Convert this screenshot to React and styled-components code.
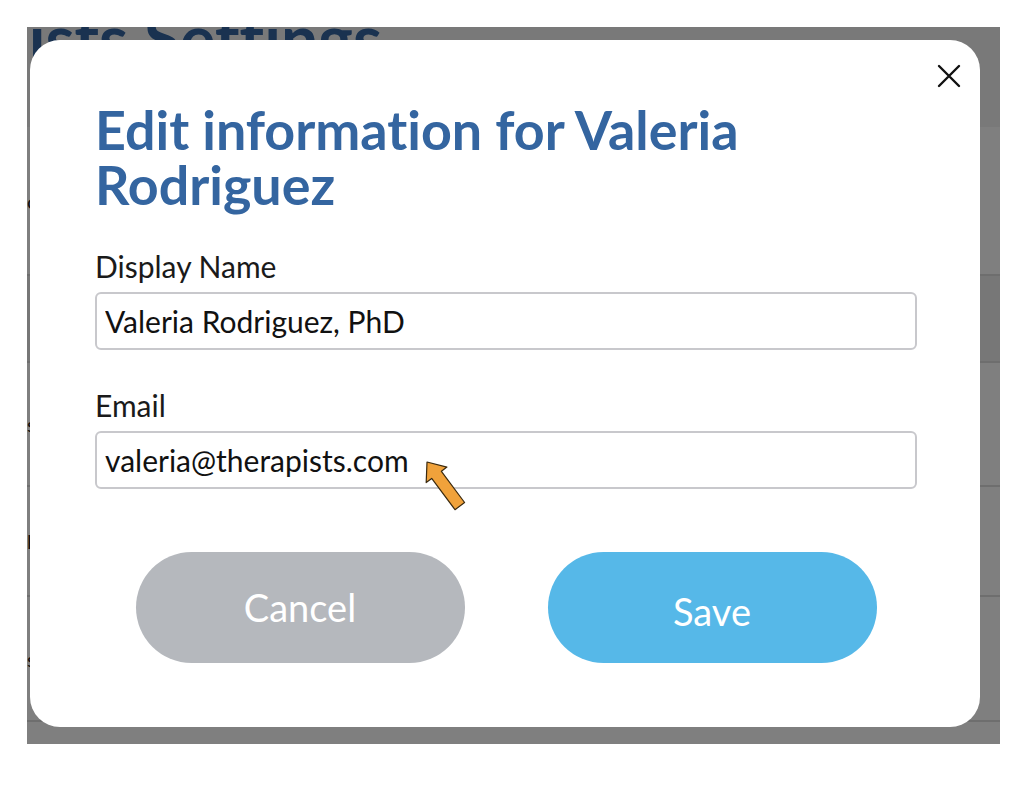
import React, { useState } from "react";
import styled, { createGlobalStyle } from "styled-components";

const GlobalStyle = createGlobalStyle`
  body {
    margin: 0;
    background: #ffffff;
    font-family: Lato, "Open Sans", sans-serif;
    font-variant-ligatures: no-common-ligatures;
  }
`;

const Screen = styled.div`
  padding: 27px 24px 41px 27px;
`;

const Frame = styled.div`
  position: relative;
  width: 973px;
  height: 717px;
  overflow: hidden;
  background: #ffffff;
`;

const PageHeader = styled.div`
  height: 100px;
  background: #f3f3f3;
  overflow: hidden;
`;

const PageTitle = styled.h1`
  margin: -27px 0 0 -205px;
  font-size: 66px;
  font-weight: 700;
  line-height: 76px;
  color: #3465a0;
  white-space: nowrap;
`;

const Row = styled.div`
  display: flex;
  align-items: center;
  height: ${(p) => p.height}px;
  background: ${(p) => (p.shaded ? "#eeeeee" : "#ffffff")};
  border-bottom: 2px solid #dddddd;
  font-size: 20px;
  color: #222;
  white-space: nowrap;
`;

const Overlay = styled.div`
  position: absolute;
  inset: 0;
  background: rgba(0, 0, 0, 0.5);
  display: flex;
  align-items: flex-start;
  padding: 13px 0 0 3px;
`;

const Modal = styled.div`
  position: relative;
  width: 950px;
  height: 687px;
  box-sizing: border-box;
  background: #ffffff;
  border-radius: 30px;
  padding: 62px 63px 0 65px;
  display: flex;
  flex-direction: column;
`;

const CloseButton = styled.button`
  position: absolute;
  top: 22px;
  right: 17px;
  width: 28px;
  height: 28px;
  padding: 0;
  border: none;
  background: none;
  cursor: pointer;
  display: flex;
  align-items: center;
  justify-content: center;
`;

const Title = styled.h2`
  margin: 0 0 36px;
  max-width: 760px;
  font-size: 53.8px;
  font-weight: 700;
  line-height: 55px;
  color: #3465a0;
`;

const Field = styled.div`
  display: flex;
  flex-direction: column;
  margin-bottom: 37px;
`;

const Label = styled.label`
  font-size: 30px;
  line-height: 36px;
  color: #1a1a1a;
  margin-bottom: 8px;
`;

const Input = styled.input`
  box-sizing: border-box;
  width: 100%;
  height: 58px;
  padding: 0 8px;
  border: 2px solid #c8c8cc;
  border-radius: 6px;
  font-family: Lato, "Open Sans", sans-serif;
  font-size: 30px;
  color: #111;
  background: #fff;
  outline: none;
`;

const Actions = styled.div`
  display: flex;
  justify-content: center;
  gap: 83px;
  margin-top: 26px;
`;

const PillButton = styled.button`
  width: 329px;
  height: 111px;
  border: none;
  border-radius: 56px;
  background: ${(p) => (p.primary ? "#56b8e8" : "#b5b8bd")};
  color: #ffffff;
  font-family: Lato, "Open Sans", sans-serif;
  font-size: 38px;
  padding: ${(p) => (p.primary ? "6px 0 0" : "0 0 2px")};
  cursor: pointer;
`;

const Pointer = styled.svg`
  position: absolute;
  left: 389px;
  top: 415px;
`;

const CloseIcon = () => (
  <svg width="24" height="24" viewBox="0 0 24 24">
    <path d="M2 2 L22 22 M22 2 L2 22" stroke="#111" strokeWidth="2.4" strokeLinecap="round" />
  </svg>
);

const App = () => {
  const [name, setName] = useState("Valeria Rodriguez, PhD");
  const [email, setEmail] = useState("valeria@therapists.com");

  return (
    <>
      <GlobalStyle />
      <Screen>
        <Frame>
          <PageHeader>
            <PageTitle>Therapists Settings</PageTitle>
          </PageHeader>
          <Row height={147}>cc</Row>
          <Row height={85} shaded>
            {" "}
          </Row>
          <Row height={122}>ss</Row>
          <Row height={108}>ll</Row>
          <Row height={123}>ss</Row>
          <Row height={100}> </Row>
          <Overlay>
            <Modal>
              <CloseButton aria-label="Close">
                <CloseIcon />
              </CloseButton>
              <Title>Edit information for Valeria Rodriguez</Title>
              <Field>
                <Label>Display Name</Label>
                <Input value={name} onChange={(e) => setName(e.target.value)} />
              </Field>
              <Field>
                <Label>Email</Label>
                <Input value={email} onChange={(e) => setEmail(e.target.value)} />
              </Field>
              <Actions>
                <PillButton>Cancel</PillButton>
                <PillButton primary>Save</PillButton>
              </Actions>
              <Pointer width="50" height="58" viewBox="0 0 50 58">
                <polygon
                  points="8,7 27.9,12.1 22.4,16.3 45.6,47.5 36,54.7 12.7,23.4 7.2,27.6"
                  fill="#f0a23b"
                  stroke="#3a2a10"
                  strokeWidth="1.2"
                  strokeLinejoin="round"
                />
              </Pointer>
            </Modal>
          </Overlay>
        </Frame>
      </Screen>
    </>
  );
};

export default App;
